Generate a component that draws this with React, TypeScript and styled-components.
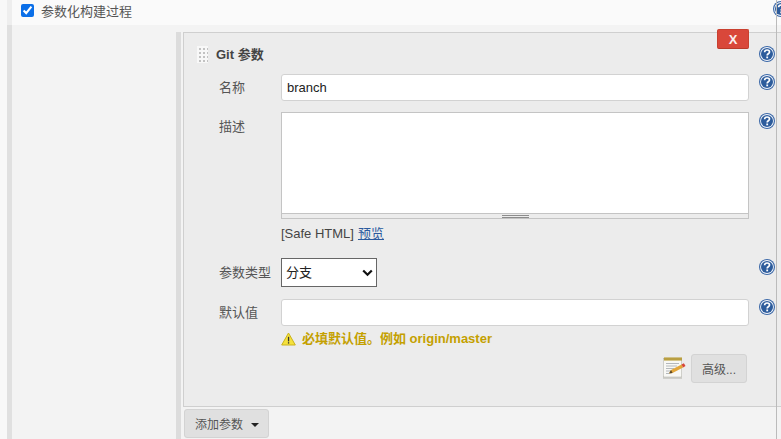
import React from "react";
import styled, { createGlobalStyle } from "styled-components";

const GlobalStyle = createGlobalStyle`
  html, body {
    margin: 0;
    padding: 0;
    background: #fff;
    overflow: hidden;
  }
  body {
    font-family: "Liberation Sans", "Noto Sans CJK SC", sans-serif;
    font-size: 13px;
    color: #333;
  }
`;

const Page = styled.div`
  width: 781px;
  height: 439px;
  overflow: hidden;
  display: flex;
  padding-left: 7px;
  box-sizing: border-box;
  background: #f8f8f8;
`;

const Section = styled.div`
  position: relative;
  flex: 1;
  display: flex;
  flex-direction: column;
  &::after {
    content: "";
    position: absolute;
    top: 0;
    bottom: 0;
    right: 4px;
    width: 1px;
    background: #bbb;
  }
`;

const TopRow = styled.div`
  position: relative;
  height: 25px;
  flex: none;
  background: #fafafa;
  border-left: 5px solid #eeeeee;
  display: flex;
  align-items: center;
  padding-left: 9px;
  label {
    display: flex;
    align-items: center;
    gap: 7px;
    color: #555;
    margin-top: -5px;
  }
  input {
    width: 13px;
    height: 13px;
    margin: 0;
    accent-color: #0b6fe8;
  }
`;

const Body = styled.div`
  flex: 1;
  background: #f3f3f3;
  border-left: 5px solid #e0e0e0;
  padding: 7px 0 0 164px;
`;

const Holder = styled.div`
  border-left: 5px solid #dcdcdc;
  padding-left: 2px;
  height: 407px;
`;

const Panel = styled.div`
  position: relative;
  height: 375px;
  box-sizing: border-box;
  background: #ececec;
  border-top: 1px solid #cfcfcf;
  border-left: 1px solid #cfcfcf;
  border-bottom: 1px solid #cfcfcf;
  padding: 10px 0 0 0;
`;

const DeleteButton = styled.button`
  position: absolute;
  right: 32px;
  top: -4px;
  width: 32px;
  height: 20px;
  padding: 0;
  border: 1px solid #c9402f;
  border-bottom-color: #b93a2a;
  border-radius: 2px;
  background: #d9473a;
  color: #fbeeee;
  font: bold 13px "Liberation Sans", sans-serif;
`;

const PanelHeader = styled.div`
  display: flex;
  align-items: center;
  height: 20px;
  padding: 0 6px 0 13px;
  gap: 8px;
  font-weight: bold;
  color: #444;
`;

const HeaderHelp = styled.div`
  margin: 2px 0 0 auto;
  display: flex;
`;

const Handle = styled.div`
  width: 11px;
  height: 17px;
  margin-top: 3px;
  background-color: #c2c2c2;
  background-image: linear-gradient(#f8f8f8 50%, transparent 50%),
    linear-gradient(90deg, #f8f8f8 50%, transparent 50%);
  background-size: 4px 4px;
`;

const Row = styled.div<{ $top: number }>`
  display: grid;
  grid-template-columns: 62px 468px 1fr;
  padding-left: 35px;
  margin-top: ${(p) => p.$top}px;
  align-items: start;
`;

const FieldLabel = styled.div<{ $height?: number }>`
  color: #555;
  height: ${(p) => p.$height ?? 27}px;
  line-height: ${(p) => p.$height ?? 27}px;
  white-space: nowrap;
`;

const TextInput = styled.input`
  display: block;
  width: 468px;
  height: 27px;
  box-sizing: border-box;
  border: 1px solid #d2d2d2;
  border-radius: 3px;
  background: #fff;
  padding: 0 4px 1px 5px;
  font: 13px "Liberation Sans", sans-serif;
  color: #222;
  outline: none;
`;

const TextBox = styled.div`
  width: 468px;
  height: 107px;
  box-sizing: border-box;
  border: 1px solid #c4c4c4;
  background: #fff;
  display: flex;
  flex-direction: column;
  justify-content: flex-end;
`;

const Grip = styled.div`
  height: 4px;
  background: #ececec;
  border-top: 1px solid #c4c4c4;
  display: flex;
  justify-content: flex-end;
  padding-right: 219px;
  i {
    display: block;
    width: 27px;
    height: 0;
    margin-top: 1px;
    padding-bottom: 1px;
    border-top: 1px solid #8c8c8c;
    border-bottom: 1px solid #8c8c8c;
    box-sizing: content-box;
  }
`;

const Helper = styled.div<{ $top?: number }>`
  display: flex;
  margin: ${(p) => p.$top ?? 0}px 0 0 10px;
`;

const SafeNote = styled.div`
  grid-column: 2;
  color: #444;
  line-height: 15px;
  a {
    color: #2a5a9e;
    text-decoration: underline;
    margin-left: 4px;
  }
`;

const SelectWrap = styled.div`
  position: relative;
  width: 96px;
  height: 29px;
  svg {
    position: absolute;
    right: 4px;
    top: 11px;
    pointer-events: none;
  }
`;

const Dropdown = styled.select`
  display: block;
  width: 96px;
  height: 29px;
  box-sizing: border-box;
  appearance: none;
  border: 1px solid #666;
  border-radius: 0;
  background: #fff;
  padding: 0 4px;
  font: 13px "Liberation Sans", "Noto Sans CJK SC", sans-serif;
  color: #222;
`;

const Warning = styled.div`
  display: flex;
  align-items: center;
  gap: 6px;
  color: #c4a000;
  font-weight: bold;
  line-height: 16px;
  margin-top: 5px;
`;

const ActionRow = styled.div`
  display: flex;
  justify-content: flex-end;
  align-items: center;
  gap: 5px;
  padding-right: 34px;
  margin-top: 7px;
`;

const GreyButton = styled.button`
  border: 1px solid #d3d3d3;
  border-radius: 3px;
  background: #e0e0e0;
  color: #555;
  font: 12px "Liberation Sans", "Noto Sans CJK SC", sans-serif;
  padding: 0;
`;

const AdvancedButton = styled(GreyButton)`
  width: 56px;
  height: 29px;
`;

const AddButton = styled(GreyButton)`
  display: flex;
  align-items: center;
  justify-content: space-between;
  width: 85px;
  height: 29px;
  margin: 2px 0 0 1px;
  padding: 0 9px 0 10px;
  box-sizing: border-box;
  &::after {
    content: "";
    border-left: 4px solid transparent;
    border-right: 4px solid transparent;
    border-top: 4px solid #222;
    margin-top: 2px;
  }
`;

const TopHelp = styled.div`
  position: absolute;
  right: -8px;
  top: 1px;
`;

const HelpIcon = () => (
  <svg width="16" height="16" viewBox="0 0 16 16">
    <circle cx="8" cy="8" r="8" fill="#3b68a8" />
    <circle cx="8" cy="8" r="6.9" fill="#f4f6fa" />
    <circle cx="8" cy="8" r="6" fill="#2d5c9c" />
    <path d="M5.6 6.2c.1-1.5 1.1-2.2 2.5-2.2s2.4.8 2.4 2c0 1.8-2.3 1.7-2.3 3.4" fill="none" stroke="#fff" strokeWidth="1.7" />
    <rect x="7.3" y="10.5" width="1.8" height="1.8" fill="#fff" />
  </svg>
);

const WarnIcon = () => (
  <svg width="15" height="14" viewBox="0 0 15 14">
    <path d="M7.5 1L14.3 13H.7z" fill="#f5e13c" stroke="#c9b21a" strokeWidth="1" strokeLinejoin="round" />
    <rect x="6.9" y="4.8" width="1.3" height="4.6" fill="#333" />
    <rect x="6.9" y="10.2" width="1.3" height="1.4" fill="#333" />
  </svg>
);

const ChevronIcon = () => (
  <svg width="11" height="8" viewBox="0 0 11 8">
    <path d="M1.2 1.5l4.3 4.3 4.3-4.3" fill="none" stroke="#111" strokeWidth="2.2" />
  </svg>
);

const NotepadIcon = () => (
  <svg width="24" height="24" viewBox="0 0 24 24">
    <rect x="1" y="19" width="19" height="3" fill="#cfcfcb" />
    <rect x="1.5" y="1.5" width="18" height="18.5" fill="#f8f8f5" stroke="#b8b8b1" strokeWidth="0.6" />
    <rect x="2" y="0.5" width="18" height="3" fill="#c9ad4a" />
    <path d="M3 .5v3M5 .5v3M7 .5v3M9 .5v3M11 .5v3M13 .5v3M15 .5v3M17 .5v3M19 .5v3" stroke="#93802f" strokeWidth="0.6" />
    <path d="M4 6.5h13M4 9h11M4 11.5h8M4 14h5M4 16.5h3" stroke="#b4b8bc" strokeWidth="1" />
    <path d="M7 16.5l2-3.4 10.5-5.6 1.6 2.9-10.6 5.6z" fill="#e3a63a" />
    <path d="M19.5 7.5l1.6 2.9 2.4-1.3-1.6-2.9z" fill="#d6453a" />
    <path d="M7 16.5l2-3.4 1.5 2.8z" fill="#5a4828" />
  </svg>
);

export default function App() {
  return (
    <>
      <GlobalStyle />
      <Page>
        <Section>
          <TopRow>
            <label>
              <input type="checkbox" defaultChecked readOnly />
              参数化构建过程
            </label>
            <TopHelp>
              <HelpIcon />
            </TopHelp>
          </TopRow>
          <Body>
            <Holder>
              <Panel>
                <DeleteButton>X</DeleteButton>
                <PanelHeader>
                  <Handle />
                  Git 参数
                  <HeaderHelp>
                    <HelpIcon />
                  </HeaderHelp>
                </PanelHeader>
                <Row $top={11}>
                  <FieldLabel>名称</FieldLabel>
                  <TextInput defaultValue="branch" />
                  <Helper>
                    <HelpIcon />
                  </Helper>
                </Row>
                <Row $top={11}>
                  <FieldLabel $height={29}>描述</FieldLabel>
                  <TextBox>
                    <Grip>
                      <i />
                    </Grip>
                  </TextBox>
                  <Helper $top={1}>
                    <HelpIcon />
                  </Helper>
                </Row>
                <Row $top={7}>
                  <SafeNote>
                    [Safe HTML]<a href="#">预览</a>
                  </SafeNote>
                </Row>
                <Row $top={17}>
                  <FieldLabel $height={29}>参数类型</FieldLabel>
                  <SelectWrap>
                    <Dropdown defaultValue="branch">
                      <option value="branch">分支</option>
                    </Dropdown>
                    <ChevronIcon />
                  </SelectWrap>
                  <Helper $top={1}>
                    <HelpIcon />
                  </Helper>
                </Row>
                <Row $top={12}>
                  <FieldLabel>默认值</FieldLabel>
                  <div>
                    <TextInput />
                    <Warning>
                      <WarnIcon />
                      必填默认值。例如 origin/master
                    </Warning>
                  </div>
                  <Helper>
                    <HelpIcon />
                  </Helper>
                </Row>
                <ActionRow>
                  <NotepadIcon />
                  <AdvancedButton>高级...</AdvancedButton>
                </ActionRow>
              </Panel>
              <AddButton>添加参数</AddButton>
            </Holder>
          </Body>
        </Section>
      </Page>
    </>
  );
}
